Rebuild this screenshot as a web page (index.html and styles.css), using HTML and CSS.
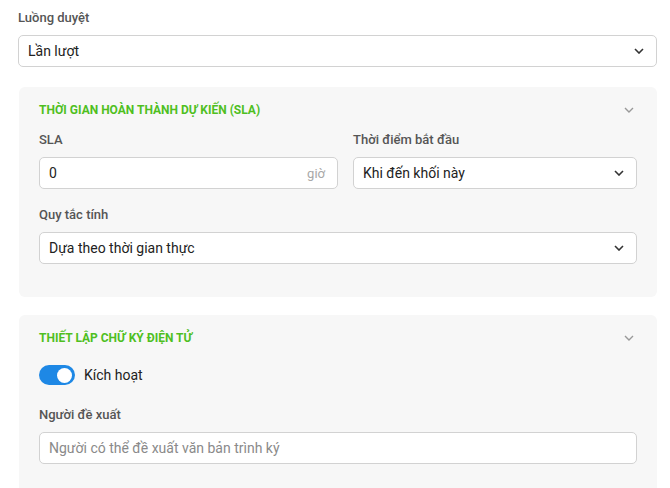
FILE: index.html
```html
<!DOCTYPE html>
<html lang="vi">
<head>
<meta charset="utf-8">
<link rel="stylesheet" href="styles.css">
</head>
<body>
<div class="page">
  <div class="field top-field">
    <div class="label">Luồng duyệt</div>
    <div class="control select">
      <span class="value">Lần lượt</span>
      <svg class="caret" width="10" height="6" viewBox="0 0 10 6"><path d="M1 1 L5 5 L9 1" fill="none" stroke="#333" stroke-width="1.6"/></svg>
    </div>
  </div>

  <section class="panel">
    <div class="panel-head">
      <span class="panel-title">Thời gian hoàn thành dự kiến (SLA)</span>
      <svg class="panel-caret" width="10" height="6" viewBox="0 0 10 6"><path d="M1 1 L5 5 L9 1" fill="none" stroke="#999" stroke-width="1.4"/></svg>
    </div>
    <div class="row-2">
      <div class="field">
        <div class="label">SLA</div>
        <div class="control input">
          <span class="value">0</span>
          <span class="suffix">giờ</span>
        </div>
      </div>
      <div class="field">
        <div class="label">Thời điểm bắt đầu</div>
        <div class="control select">
          <span class="value">Khi đến khối này</span>
          <svg class="caret" width="10" height="6" viewBox="0 0 10 6"><path d="M1 1 L5 5 L9 1" fill="none" stroke="#333" stroke-width="1.6"/></svg>
        </div>
      </div>
    </div>
    <div class="field gap-field">
      <div class="label">Quy tắc tính</div>
      <div class="control select">
        <span class="value">Dựa theo thời gian thực</span>
        <svg class="caret" width="10" height="6" viewBox="0 0 10 6"><path d="M1 1 L5 5 L9 1" fill="none" stroke="#333" stroke-width="1.6"/></svg>
      </div>
    </div>
  </section>

  <section class="panel panel-2">
    <div class="panel-head">
      <span class="panel-title">Thiết lập chữ ký điện tử</span>
      <svg class="panel-caret" width="10" height="6" viewBox="0 0 10 6"><path d="M1 1 L5 5 L9 1" fill="none" stroke="#999" stroke-width="1.4"/></svg>
    </div>
    <div class="switch-row">
      <span class="switch"><span class="knob"></span></span>
      <span class="switch-label">Kích hoạt</span>
    </div>
    <div class="field proposer">
      <div class="label">Người đề xuất</div>
      <div class="control input">
        <span class="placeholder">Người có thể đề xuất văn bản trình ký</span>
      </div>
    </div>
  </section>
</div>
</body>
</html>
```

FILE: styles.css
```css
* { box-sizing: border-box; }
html, body { margin: 0; padding: 0; background: #fff; }
body {
  font-family: Roboto, "Noto Sans", "Liberation Sans", sans-serif;
  color: #222;
  overflow: hidden;
  height: 488px;
}
.page {
  padding: 9px 13px 0 18px;
}
.label {
  font-size: 13px;
  line-height: 18px;
  color: #555;
  font-weight: 500;
  margin-bottom: 8px;
}
.control {
  height: 32px;
  background: #fff;
  border: 1px solid #d2d2d2;
  border-radius: 5px;
  display: flex;
  align-items: center;
  padding: 0 12px 0 9px;
  font-size: 14px;
}
.control .value { flex: 1; color: #222; }
.caret { flex: none; }
.suffix { color: #a8a8a8; font-size: 13px; }
.placeholder { color: #8a8a8a; }

.panel {
  margin-top: 20px;
  margin-left: 1px;
  background: #f7f7f7;
  border-radius: 6px;
  padding: 14px 20px 33px 20px;
}
.panel-2 { margin-top: 18px; padding-bottom: 30px; }
.panel-head {
  display: flex;
  align-items: center;
  justify-content: space-between;
  height: 18px;
}
.panel-title {
  text-transform: uppercase;
  color: #4fbf1f;
  font-size: 12px;
  font-weight: 700;
  line-height: 18px;
}
.panel-caret { margin-right: 3px; }
.row-2 {
  display: grid;
  grid-template-columns: 299px 1fr;
  column-gap: 15px;
  margin-top: 12px;
}
.gap-field { margin-top: 17px; }
.switch-row {
  margin-top: 18px;
  display: flex;
  align-items: center;
  gap: 9px;
  height: 20px;
}
.switch {
  width: 36px;
  height: 20px;
  border-radius: 10px;
  background: #1e88e5;
  display: flex;
  align-items: center;
  justify-content: flex-end;
  padding: 0 3px;
}
.knob {
  width: 15px;
  height: 15px;
  border-radius: 50%;
  background: #fff;
}
.switch-label { font-size: 14px; color: #222; }
.proposer { margin-top: 21px; }
```
